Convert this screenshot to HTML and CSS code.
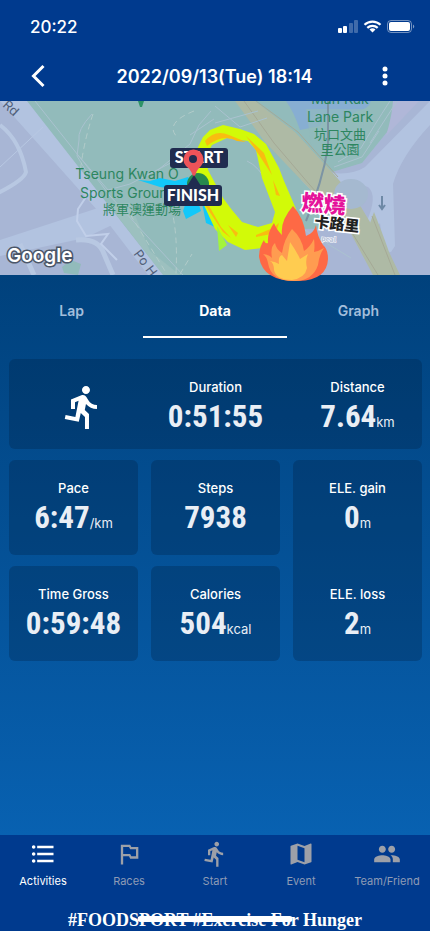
FILE: index.html
```html
<!DOCTYPE html>
<html lang="en">
<head>
    <meta charset="UTF-8">
    <meta name="viewport" content="width=device-width, initial-scale=1.0">
    <title>Activity Data</title>
    <link rel="stylesheet" href="styles.css">
</head>
<body>
    <!-- Status Bar -->
    <div class="status-bar">
        <span class="clock">20:22</span>
        <svg class="status-icons" viewBox="0 0 78 14" aria-hidden="true">
            <g fill="#fff">
                <rect x="0" y="8" width="4" height="5" rx="1"/>
                <rect x="5" y="6" width="4" height="7" rx="1"/>
                <rect x="11" y="3" width="4" height="10" rx="1" opacity=".25"/>
                <rect x="16" y="0" width="4" height="13" rx="1" opacity=".25"/>
                <path d="M31.500 9.500 34.500 12.500 37.500 9.500a4.500 4.500 0 0 0-6 0z"/>
            </g>
            <g fill="none" stroke="#fff" stroke-width="2.200">
                <path d="M26.500 4.800a11.500 11.500 0 0 1 16 0"/>
                <path d="M29.300 7.900a7.500 7.500 0 0 1 10.400 0"/>
            </g>
            <rect x="49.500" y=".5" width="24" height="12" rx="3.500" fill="none" stroke="#fff" stroke-opacity=".45"/>
            <rect x="51" y="2" width="21" height="9" rx="2" fill="#fff"/>
            <path d="M75 4.500q2.500 2 0 4z" fill="#fff" opacity=".5"/>
        </svg>
    </div>

    <!-- Header -->
    <header class="header">
        <button class="icon-btn" aria-label="Back">
            <svg width="24" height="24" viewBox="0 0 24 24"><path d="M17.500 2 7.500 12l10 10" fill="none" stroke="#fff" stroke-width="3"/></svg>
        </button>
        <h1>2022/09/13(Tue) 18:14</h1>
        <button class="icon-btn" aria-label="More">
            <svg width="24" height="24" viewBox="0 0 24 24" fill="#fff"><circle cx="12" cy="5" r="2.500"/><circle cx="12" cy="12" r="2.500"/><circle cx="12" cy="19" r="2.500"/></svg>
        </button>
    </header>

    <!-- Route Map -->
    <div class="map">
        <svg viewBox="0 0 430 174" role="img" aria-label="Route map">
            <defs>
                <clipPath id="mapClip"><rect width="430" height="174"/></clipPath>
            </defs>
            <g clip-path="url(#mapClip)">
                <rect width="430" height="174" fill="#a8b6d5"/>
                <!-- parks -->
                <path d="M25 0H255L302 80 348 127 302 128 306 174H163z" fill="#92bbbb"/>
                <path d="M252 0H412L362 62 332 71z" fill="#92bbbb"/>
                <path d="M130 102 150 150 180 174H163L108 103z" fill="#9cc0bf"/>
                <path d="M286 0h85q-2 8-14 10l-12 8-18-3-7 10-20 4q-6-18-14-29z" fill="#87aed2"/>
                <path d="M306 8h58l-2 42h-50z" fill="#92bbbb" opacity=".6"/>
                <path d="M393 0h26l-33 35q6-20 7-35z" fill="#b0b7d8"/>
                <path d="M62 166l9-7 10 4-3 11-14-2z" fill="#92bbbb"/>
                <!-- roads -->
                <path d="M0 0H27L163 174H148L112 127 98 110z" fill="#b2c3e0"/>
                <path d="M0 139 98 107 112 124 85 137 0 155z" fill="#b2c3e0"/>
                <path d="M0 24q20 15 26 47-2 8-28 21" fill="none" stroke="#b8c8e2" stroke-width="4"/>
                <path d="M76 139q23-2 28 14l9 21M20 143l14 31" fill="none" stroke="#b8c8e2" stroke-width="5"/>
                <path d="M430 0 365 66q-12 8-32 6l-9 6 10 8q26-4 34 0 10 8-1 34l-7 11 8 7 12-16 4 28 7 1 4-6-2-62q8-28 37-59z" fill="#b2c3e0"/>
                <path d="M235 0H255L295 31 332 71 358 101 382 141 398 174H373L348 127 303 81 265 41z" fill="#aebaa5"/>
                <path d="M374 111q11 28 15 40l11 23h-8l-12-29-10-23z" fill="#aebaa5"/>
                <g fill="none" stroke="#a5a996" stroke-width="1">
                    <path d="M244 0 274 42 309 83 351 130 378 174"/>
                    <path d="M256 0 298 31 338 76M372 115l23 59"/>
                </g>
                <path d="M328 0V46Q322 82 306 120" fill="none" stroke="#7c94a4" stroke-width="2"/>
                <!-- paths and stadium outlines -->
                <g fill="none" stroke="#aac2cf" stroke-width="1">
                    <path d="M35 0 101 83 110 95 183 174M78 54 108 89 130 83 186 54M158 69l32-26 9-19 12-14M215 22l43-12M215 5l25 21 27-9M190 34l24-16"/>
                    <path d="M92 13q-15 16-13 26l-2 16 12 20"/>
                    <path d="M269 85q-10-20-22-25M298 120q-5 10-26 14M303 128l48 29M379 30l-17 26-28 10"/>
                    <path d="M390 0Q373 26 361 47l-23 14M397 0 370 42"/>
                </g>
                <path d="M90 90l-12 18-1 12 9 15 22-2-7 10 16 16" fill="none" stroke="#c1cfe9" stroke-width="2"/>
                <path d="M0 66 43 26" fill="none" stroke="#b8c8e2"/>
                <g fill="none" stroke="#b2ccca" stroke-width="1" stroke-dasharray="6 4">
                    <path d="M93 13q-10 30-13 60M125 105l40 65M171 107q7 24 5 66M180 173l12-20"/>
                    <path d="M194 10q-30 12-17 26"/>
                </g>
                <ellipse cx="351" cy="93" rx="17" ry="15" fill="#a5b9d0"/>
                <path d="M138 0h6l-2 6h-2z" fill="#2e9368"/>
                <path d="M382 95v13m-3-4 3 4 3-4" fill="none" stroke="#6e89a6" stroke-width="2"/>

                <!-- place names -->
                <g class="place">
                    <text x="127" y="78" text-anchor="middle">Tseung Kwan O</text>
                    <text x="80" y="97">Sports Ground</text>
                    <text class="place-cjk" x="142" y="113" text-anchor="middle">將軍澳運動場</text>
                    <text x="340" y="3" text-anchor="middle">Man Kuk</text>
                    <text x="340" y="21" text-anchor="middle">Lane Park</text>
                    <text class="place-cjk" x="340" y="38" text-anchor="middle">坑口文曲</text>
                    <text class="place-cjk" x="340" y="53" text-anchor="middle">里公園</text>
                </g>
                <text class="road-name" transform="translate(2 5) rotate(42)">Rd</text>
                <text class="road-name" transform="translate(133 153) rotate(53)">Po Hong</text>
                <text class="google" x="7" y="161">Google</text>

                <!-- route heat line -->
                <path d="M138 79 150 80 160 77 175 80 188 76 196 86 192 92 175 88 160 86z" fill="#12c8fa"/>
                <path d="M186 101h12l3 9-15 8-3-8zM202 102l13 3 9 10-3 11 3 10-9-10-9-4z" fill="#12c8fa"/>
                <path fill-rule="evenodd" d="M198 46 203 36 210 29 223 24 240 28 254 33 266 43 279 67 284 80 296 108 290 134 262 147 245 149 228 141 215 128 203 102 190 82 196 68zM212 44 227 37 248 40 256 49 262 77 275 111 272 122 258 126 242 121 232 109 223 97 208 69 206 55z" fill="#d2fa08"/>
                <path d="M205 40q10-12 24-6l17 7-9-1q-14-8-30 5zM246 35l18 17 8 22-11-17-12-18zM273 79l7 16-4-1zM208 103l13 23 10 11-8-6-18-27zM228 124l10 8-2 4zM256 134l17-7 6-5-3 10-20 4z" fill="#f9bd10"/>
                <path d="M217 125l10 19-8 6z" fill="#a3f43c"/>

                <!-- start and finish pins -->
                <circle cx="198" cy="83" r="11" fill="#27894e"/>
                <rect x="170" y="47" width="58" height="20" rx="3" fill="#202c50"/>
                <text class="pin-label" x="199" y="62" text-anchor="middle">START</text>
                <path d="M194 80q-1-10-8-15a10 10 0 1 1 15 0q-6 5-7 15z" fill="#ed5359"/>
                <circle cx="193" cy="58" r="4" fill="#202c50"/>
                <path d="M197 81l5 6-4 1z" fill="#fff"/>
                <path d="M187 85 194 74 201 85z" fill="#202c50"/>
                <rect x="164" y="84" width="58" height="21" rx="3" fill="#202c50"/>
                <text class="pin-label" x="193" y="100" text-anchor="middle">FINISH</text>
            </g>

            <!-- calorie sticker -->
            <g class="sticker">
                <text class="burn" transform="translate(301 109) rotate(5)">燃燒</text>
                <text class="tiny" transform="translate(321 140) rotate(5)">pcal</text>
                <text class="calorie" transform="translate(314 126) rotate(6)">卡路里</text>
            </g>
            <path d="M293 105q11 12 13 30 8-3 10-11 1 11 7 20 5 4 5 14-1 21-29 22-36 1-40-24 0-10 5-17 1 4 4 3-1-10 6-20 2 6 8 12-2-14 11-29z" fill="#fe6945"/>
            <path d="M292 128q10 9 12 22 6-4 10-12 1 8 0 13 5-1 10-4-5 7-6 17-5 15-22 16-25 1-28-18-1-6-5-9 7 1 9 4-2-11 3-15 1 6 7 10 2-14 10-24z" fill="#ff9c50"/>
            <path d="M290 141q7 10 10 17l8-5q-3 6-1 14-2 10-15 12-16 0-18-10 0-7-4-9 6 1 9 3-1-8 3-9l5 6z" fill="#ffcc50"/>
        </svg>
    </div>

    <!-- Tabs -->
    <nav class="tabs">
        <a href="#">Lap</a>
        <a href="#" class="active">Data</a>
        <a href="#">Graph</a>
    </nav>

    <!-- Activity Stats -->
    <main class="stats">
        <section class="card summary">
            <svg class="run-icon" viewBox="0 0 24 24" role="img" aria-label="Run"><use href="#runner"/></svg>
            <div class="stat">
                <h2>Duration</h2>
                <p>0:51:55</p>
            </div>
            <div class="stat">
                <h2>Distance</h2>
                <p>7.64<small>km</small></p>
            </div>
        </section>
        <section class="card stat">
            <h2>Pace</h2>
            <p>6:47<small>/km</small></p>
        </section>
        <section class="card stat">
            <h2>Steps</h2>
            <p>7938</p>
        </section>
        <section class="card elevation">
            <div class="stat">
                <h2>ELE. gain</h2>
                <p>0<small>m</small></p>
            </div>
            <div class="stat">
                <h2>ELE. loss</h2>
                <p>2<small>m</small></p>
            </div>
        </section>
        <section class="card stat">
            <h2>Time Gross</h2>
            <p>0:59:48</p>
        </section>
        <section class="card stat">
            <h2>Calories</h2>
            <p>504<small>kcal</small></p>
        </section>
    </main>

    <!-- Bottom Navigation -->
    <footer class="footer">
        <nav class="bottom-nav">
            <a href="#" class="active">
                <svg viewBox="0 0 24 24"><path d="M4 10.500c-.83 0-1.500.67-1.500 1.500s.67 1.500 1.500 1.500 1.500-.67 1.500-1.500-.67-1.500-1.500-1.500zm0-6c-.83 0-1.500.67-1.500 1.500S3.170 7.500 4 7.500 5.500 6.830 5.500 6 4.830 4.500 4 4.500zm0 12c-.83 0-1.500.68-1.500 1.500s.68 1.500 1.500 1.500 1.500-.68 1.500-1.500-.67-1.500-1.500-1.500zM7 19h14v-2H7v2zm0-6h14v-2H7v2zm0-8v2h14V5H7z"/></svg>
                Activities
            </a>
            <a href="#">
                <svg viewBox="0 0 24 24"><path d="M14 6l-1-2H5v17h2v-7h5l1 2h7V6h-6zm4 8h-4l-1-2H7V6h5l1 2h5v6z"/></svg>
                Races
            </a>
            <a href="#">
                <svg viewBox="0 0 24 24"><path id="runner" d="M13.490 5.480c1.100 0 2-.9 2-2s-.9-2-2-2-2 .9-2 2 .9 2 2 2zm-3.600 13.900l1-4.400 2.100 2v6h2v-7.500l-2.100-2 .6-3c1.300 1.500 3.300 2.500 5.500 2.500v-2c-1.900 0-3.500-1-4.300-2.400l-1-1.600c-.4-.6-1-1-1.700-1-.3 0-.5.1-.8.1l-5.200 2.200v4.700h2v-3.400l1.800-.7-1.600 8.100-4.900-1-.4 2 7 1.400z"/></svg>
                Start
            </a>
            <a href="#">
                <svg viewBox="0 0 24 24"><path d="M20.500 3l-.16.030L15 5.100 9 3 3.360 4.900c-.21.070-.36.250-.36.480V20.500c0 .28.220.5.5.5l.16-.030L9 18.900l6 2.100 5.640-1.900c.21-.070.36-.25.36-.48V3.500c0-.28-.22-.5-.5-.5zM15 19l-6-2.110V5l6 2.110V19z"/></svg>
                Event
            </a>
            <a href="#">
                <svg viewBox="0 0 24 24"><path d="M16 11c1.660 0 2.990-1.340 2.990-3S17.660 5 16 5c-1.660 0-3 1.340-3 3s1.340 3 3 3zm-8 0c1.660 0 2.990-1.340 2.990-3S9.660 5 8 5C6.340 5 5 6.340 5 8s1.340 3 3 3zm0 2c-2.330 0-7 1.170-7 3.500V19h14v-2.500c0-2.330-4.670-3.500-7-3.500zm8 0c-.29 0-.62.020-.97.050 1.160.84 1.970 1.970 1.970 3.450V19h6v-2.500c0-2.330-4.670-3.500-7-3.500z"/></svg>
                Team/Friend
            </a>
        </nav>
        <div class="slogan">#FOODSPORT #Exercise For Hunger</div>
        <div class="home-indicator"></div>
    </footer>
</body>
</html>
```
FILE: styles.css
```css
* {
    box-sizing: border-box;
}

body {
    font-family: Inter, Roboto, "Noto Sans CJK TC", sans-serif;
    background: linear-gradient(#00417c 275px, #0861b1 835px);
    color: #fff;
    margin: 0;
    min-height: 100vh;
    display: flex;
    flex-direction: column;
}

a {
    color: inherit;
    text-decoration: none;
}

.status-bar {
    background-color: #003a8e;
    height: 51px;
    padding: 2px 14px 0 30px;
    display: flex;
    justify-content: space-between;
    align-items: center;
}

.clock {
    font-size: 17px;
    font-weight: 500;
}

.status-icons {
    width: 78px;
    height: 14px;
}

.header {
    background-color: #003a8e;
    height: 50px;
    padding: 0 29px 0 22px;
    display: flex;
    justify-content: space-between;
    align-items: center;
}

.header h1 {
    font-size: 18px;
    font-weight: 600;
    margin: 0;
    padding-left: 6px;
}

.icon-btn {
    background: none;
    border: none;
    padding: 4px;
    display: flex;
    cursor: pointer;
}

/* Route map */
.map svg {
    display: block;
    width: 100%;
    overflow: visible;
}

.place {
    font-size: 14px;
    fill: #2d8660;
}

.place-cjk {
    font-family: "Noto Sans CJK TC", sans-serif;
    font-size: 13px;
}

.road-name {
    font-size: 13px;
    fill: #51607a;
}

.google {
    font-size: 19px;
    font-weight: 600;
    fill: #fff;
    stroke: #4b5668;
    stroke-width: 3px;
    paint-order: stroke;
}

.pin-label {
    font-family: Lato, sans-serif;
    font-size: 16px;
    font-weight: 900;
    fill: #fff;
}

.sticker text {
    font-family: "Noto Sans CJK TC", sans-serif;
    font-weight: 900;
    stroke: #fff;
    stroke-width: 3px;
    paint-order: stroke;
}

.sticker .burn {
    font-size: 22px;
    fill: #e5129b;
}

.sticker .calorie {
    font-size: 15px;
    fill: #222;
}

.sticker .tiny {
    font-size: 7px;
    fill: #b9c3d8;
    stroke-width: 1px;
}

/* Tabs */
.tabs {
    display: flex;
    font-size: 14px;
    font-weight: 600;
}

.tabs a {
    flex: 1;
    height: 63px;
    padding-top: 10px;
    display: flex;
    justify-content: center;
    align-items: center;
    color: #a3bedb;
    border-bottom: 2px solid transparent;
}

.tabs a.active {
    color: #fff;
    font-weight: 700;
    border-bottom-color: #fff;
}

/* Stats */
.stats {
    flex: 1;
    display: grid;
    grid-template-columns: repeat(3, 1fr);
    grid-auto-rows: max-content;
    align-content: start;
    gap: 11px 13px;
    padding: 21px 8px 21px 9px;
}

.card {
    background-color: rgba(0, 30, 60, 0.28);
    border-radius: 6px;
    padding: 20px 0;
}

.summary {
    grid-column: 1 / -1;
    display: grid;
    grid-template-columns: repeat(3, 1fr);
    column-gap: 13px;
    padding-bottom: 15px;
}

.elevation {
    grid-row: span 2;
    display: flex;
    flex-direction: column;
    justify-content: space-between;
}

.stat {
    text-align: center;
}

.stat h2 {
    font-size: 13px;
    font-weight: 500;
    line-height: 16px;
    margin: 0 0 4px;
}

.stat p {
    font-family: "Roboto Condensed", "Liberation Sans Narrow", Roboto, sans-serif;
    font-size: 31px;
    font-weight: 700;
    line-height: 35px;
    color: #e9eef5;
    margin: 0;
}

.stat small {
    font-family: Inter, sans-serif;
    font-size: 13px;
    font-weight: 400;
    line-height: 13px;
}

.run-icon {
    width: 48px;
    height: 48px;
    fill: #fff;
    margin: auto 31px auto auto;
}

/* Footer */
.footer {
    position: relative;
    background-color: #003a8e;
    height: 96px;
    padding-top: 5px;
}

.bottom-nav {
    display: flex;
}

.bottom-nav a {
    flex: 1;
    display: flex;
    flex-direction: column;
    align-items: center;
    gap: 5px;
    font-size: 11px;
    line-height: 16px;
    color: #8e9bb5;
}

.bottom-nav a.active {
    color: #fff;
}

.bottom-nav svg {
    width: 28px;
    height: 28px;
    fill: #9da0a8;
}

.bottom-nav .active svg {
    fill: #fff;
}

.slogan {
    font-family: "Liberation Serif", serif;
    font-size: 18px;
    font-weight: 700;
    line-height: 22px;
    text-align: center;
    margin-top: 20px;
}

.home-indicator {
    position: absolute;
    left: 50%;
    bottom: 9px;
    width: 36%;
    height: 6px;
    border-radius: 3px;
    background-color: #fff;
    transform: translateX(-50%);
}
```
